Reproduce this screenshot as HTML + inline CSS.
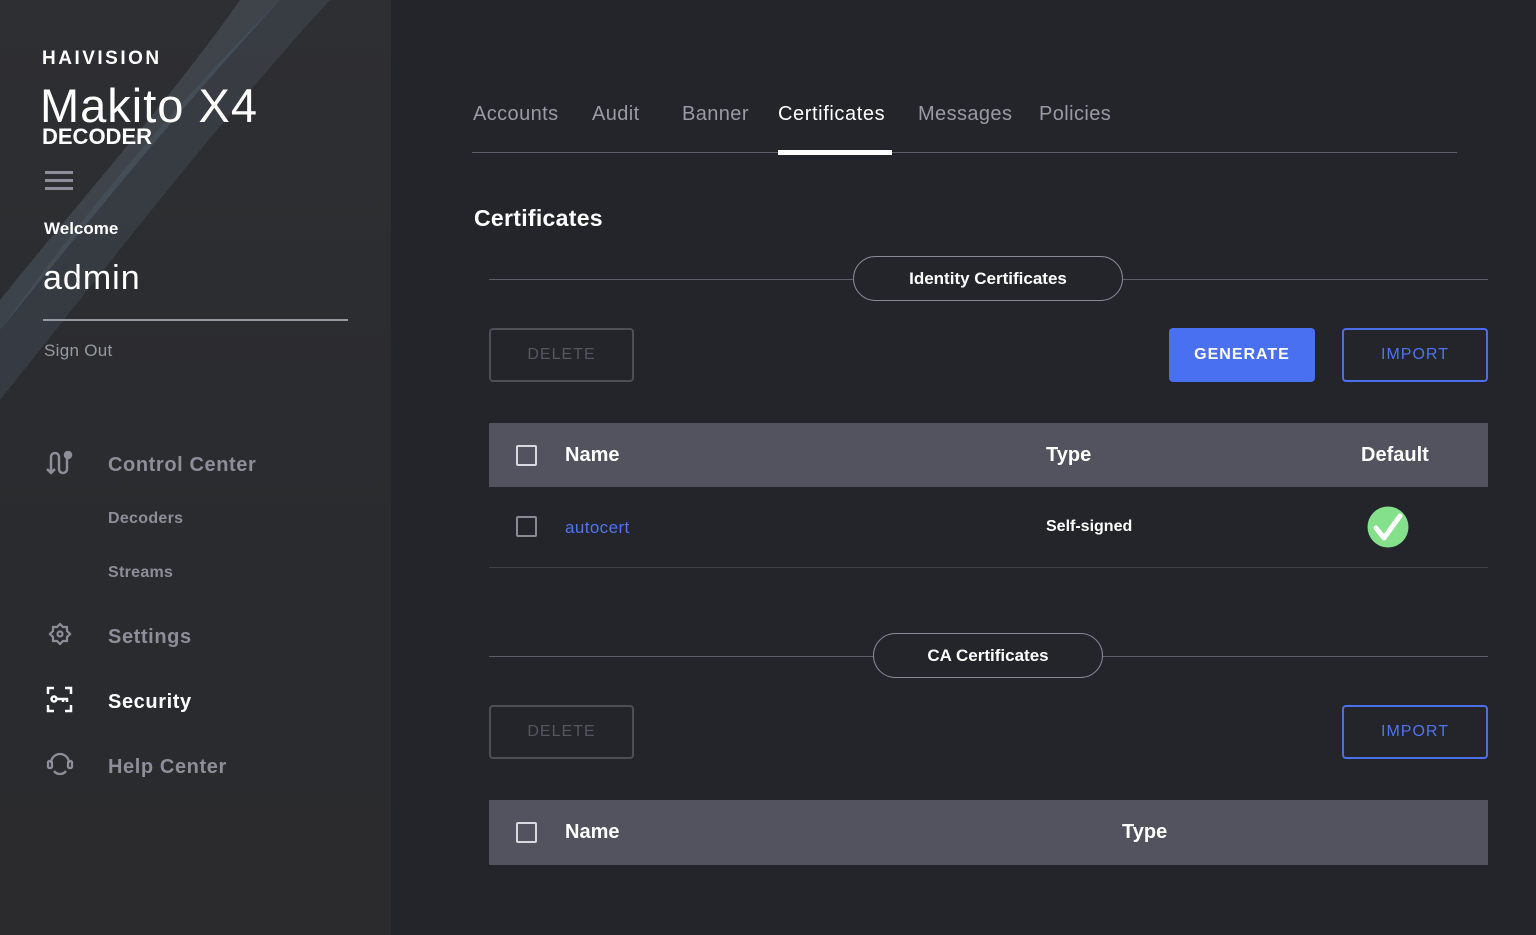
<!DOCTYPE html>
<html><head><meta charset="utf-8"><style>
*{box-sizing:border-box;margin:0;padding:0}
body{width:1536px;height:935px;overflow:hidden;background:#24252b;font-family:"Liberation Sans",sans-serif;position:relative;color:#fff}
.side{position:absolute;left:0;top:0;width:391px;height:935px;background:linear-gradient(180deg,#2e2f32 0%,#2a2b2e 60%,#2b2b2d 100%);overflow:hidden}
.a{position:absolute;white-space:nowrap}
.nav{color:#8e8e9a;font-size:20px;font-weight:bold;letter-spacing:.6px}
.sub{color:#8e8e9a;font-size:16px;font-weight:bold;letter-spacing:.3px}
.tab{position:absolute;top:103px;font-size:20px;color:#9a9aa4;letter-spacing:.4px}
.btn{position:absolute;border-radius:4px;font-size:16px;letter-spacing:1px;text-align:center;line-height:54px;height:54px}
.cb{position:absolute;width:21px;height:21px;border:2px solid #d8d8de;border-radius:2px}
.th{position:absolute;font-size:20px;font-weight:bold}
</style></head><body>
<div class="side">
<svg class="a" style="left:0;top:0" width="391" height="420"><path d="M0 400 L0 330 C80 220 160 120 280 0 L330 0 C220 120 120 250 0 400Z" fill="#4a5563" opacity=".35"/><path d="M0 300 C80 200 170 100 240 0 L280 0 C170 120 90 220 0 330Z" fill="#5f6c7c" opacity=".35"/></svg>
<div class="a" style="left:42px;top:48px;font-size:19px;letter-spacing:2.5px;font-weight:bold">HAIVISION</div>
<div class="a" style="left:40px;top:78px;font-size:47px;font-weight:300;letter-spacing:1px">Makito X4</div>
<div class="a" style="left:42px;top:124px;font-size:22px;font-weight:bold">DECODER</div>
<div class="a" style="left:45px;top:171px;width:28px;height:3px;background:#8e8e9a;box-shadow:0 8px 0 #8e8e9a,0 16px 0 #8e8e9a"></div>
<div class="a" style="left:44px;top:219px;font-size:17px;font-weight:bold">Welcome</div>
<div class="a" style="left:43px;top:259px;font-size:34px;letter-spacing:1px">admin</div>
<div class="a" style="left:43px;top:319px;width:305px;height:2px;background:#9898a2"></div>
<div class="a" style="left:44px;top:341px;font-size:17px;color:#9898a2;letter-spacing:.3px">Sign Out</div>
<svg class="a" style="left:46px;top:451px" width="28" height="24" fill="none" stroke="#8e8e9a" stroke-width="2.5"><path d="M5 22 V6 a4 4 0 0 1 8 0 v12 a4 4 0 0 0 8 0 V6"/><circle cx="22" cy="4" r="3" fill="#8e8e9a"/><path d="M1 18 l4 4 4-4"/></svg>
<div class="a nav" style="left:108px;top:454px">Control Center</div>
<div class="a sub" style="left:108px;top:510px">Decoders</div>
<div class="a sub" style="left:108px;top:564px">Streams</div>
<svg class="a" style="left:48px;top:622px" width="24" height="24" fill="none" stroke="#8e8e9a" stroke-width="2.2"><path d="M12 2 l3 3 4 0 0 4 3 3 -3 3 0 4 -4 0 -3 3 -3 -3 -4 0 0 -4 -3 -3 3 -3 0 -4 4 0z"/><circle cx="12" cy="12" r="2.5"/></svg>
<div class="a nav" style="left:108px;top:626px">Settings</div>
<svg class="a" style="left:46px;top:686px" width="27" height="27" fill="none" stroke="#fff" stroke-width="2.5"><path d="M2 8V2h6M19 2h6v6M25 19v6h-6M8 25H2v-6"/><circle cx="8" cy="13" r="2.5"/><path d="M10.5 13H21v3M17 13v3"/></svg>
<div class="a" style="left:108px;top:691px;font-size:20px;font-weight:bold;letter-spacing:.6px">Security</div>
<svg class="a" style="left:46px;top:750px" width="28" height="28" fill="none" stroke="#8e8e9a" stroke-width="2.3"><path d="M5 13 a9 9 0 0 1 18 0"/><rect x="2" y="11" width="4" height="7" rx="1.5"/><rect x="22" y="11" width="4" height="7" rx="1.5"/><path d="M8 21 c3 4 9 4 12 0"/></svg>
<div class="a nav" style="left:108px;top:756px">Help Center</div>
</div>

<div class="tab" style="left:473px">Accounts</div>
<div class="tab" style="left:592px">Audit</div>
<div class="tab" style="left:682px">Banner</div>
<div class="tab" style="left:778px;color:#fff;letter-spacing:.6px">Certificates</div>
<div class="tab" style="left:918px">Messages</div>
<div class="tab" style="left:1039px">Policies</div>
<div class="a" style="left:472px;top:152px;width:985px;height:1px;background:#5e5e6a"></div>
<div class="a" style="left:778px;top:150px;width:114px;height:5px;background:#fff"></div>
<div class="a" style="left:474px;top:205px;font-size:23px;font-weight:bold;letter-spacing:.3px">Certificates</div>

<div class="a" style="left:489px;top:279px;width:999px;height:1px;background:#5e5e6a"></div>
<div class="a" style="left:853px;top:256px;width:270px;height:45px;border:1px solid #8a8a96;border-radius:23px;background:#24252b;text-align:center;line-height:43px;font-size:17px;font-weight:bold">Identity Certificates</div>
<div class="btn" style="left:489px;top:328px;width:145px;border:2px solid #4d4e56;color:#55565e;line-height:50px">DELETE</div>
<div class="btn" style="left:1169px;top:328px;width:146px;background:#4970f0;font-weight:bold">GENERATE</div>
<div class="btn" style="left:1342px;top:328px;width:146px;border:2px solid #4a6fe8;color:#4f74ee;line-height:50px">IMPORT</div>
<div class="a" style="left:489px;top:423px;width:999px;height:64px;background:#53535f"></div>
<div class="cb" style="left:516px;top:445px"></div>
<div class="th" style="left:565px;top:444px">Name</div>
<div class="th" style="left:1046px;top:444px">Type</div>
<div class="th" style="left:1361px;top:444px">Default</div>
<div class="cb" style="left:516px;top:516px;border-color:#8a8a94"></div>
<div class="a" style="left:565px;top:518px;font-size:17px;color:#4f74ee;letter-spacing:.4px">autocert</div>
<div class="a" style="left:1046px;top:518px;font-size:16px;font-weight:bold">Self-signed</div>
<svg class="a" style="left:1367px;top:506px" width="42" height="42"><circle cx="21" cy="21" r="20.5" fill="#84e08a"/><path d="M9 22 l8 10 L33 10" stroke="#fff" stroke-width="5" fill="none" stroke-linecap="round" stroke-linejoin="round"/></svg>
<div class="a" style="left:489px;top:567px;width:999px;height:1px;background:#3e3f47"></div>

<div class="a" style="left:489px;top:656px;width:999px;height:1px;background:#5e5e6a"></div>
<div class="a" style="left:873px;top:633px;width:230px;height:45px;border:1px solid #8a8a96;border-radius:23px;background:#24252b;text-align:center;line-height:43px;font-size:17px;font-weight:bold">CA Certificates</div>
<div class="btn" style="left:489px;top:705px;width:145px;border:2px solid #4d4e56;color:#55565e;line-height:50px">DELETE</div>
<div class="btn" style="left:1342px;top:705px;width:146px;border:2px solid #4a6fe8;color:#4f74ee;line-height:50px">IMPORT</div>
<div class="a" style="left:489px;top:800px;width:999px;height:65px;background:#53535f"></div>
<div class="cb" style="left:516px;top:822px"></div>
<div class="th" style="left:565px;top:821px">Name</div>
<div class="th" style="left:1122px;top:821px">Type</div>
</body></html>
